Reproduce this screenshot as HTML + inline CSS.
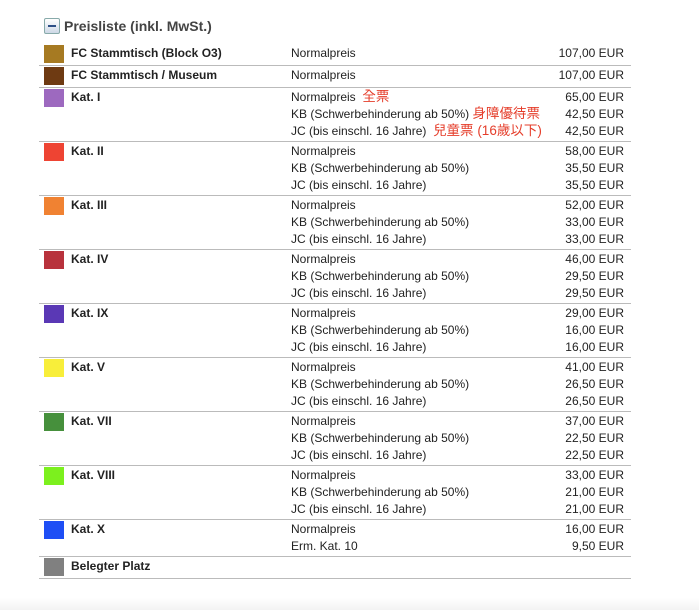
<!DOCTYPE html>
<html><head><meta charset="utf-8"><style>
body{margin:0;width:699px;height:610px;background:#fff;font-family:"Liberation Sans",Arial,sans-serif;font-size:12px;color:#222;position:relative;overflow:hidden}
.title{position:absolute;left:44px;top:18px;font-size:14px;font-weight:bold;color:#444;display:flex;align-items:center}
.mi{width:14px;height:14px;border:1px solid #8aa;background:linear-gradient(#fff,#cdd8e6);border-radius:2px;margin-right:4px;position:relative}
.mi:after{content:"";position:absolute;left:3px;right:3px;top:6px;height:2px;background:#2d4f86}
.list{position:absolute;left:39px;top:44px;width:592px}
.g{position:relative;border-bottom:1px solid #bbb;box-sizing:border-box}
.sw{position:absolute;left:5px;top:1px;width:20px;height:18px}
.n{position:absolute;left:32px;top:1px;font-weight:bold;line-height:17px}
.rows{margin-left:252px;padding-top:1px}
.r{height:17px;line-height:17px;position:relative;white-space:nowrap}
.p{position:absolute;right:7px;top:0}
.cj{color:#e53d2a;font-family:"Liberation Sans","Noto Sans CJK TC",sans-serif;font-size:13.5px;line-height:15px;vertical-align:top;position:relative;top:0}
.foot{position:absolute;left:0;right:0;top:598px;bottom:0;background:linear-gradient(#fff,#f3f3f3)}
</style></head><body>
<div class="title"><div class="mi"></div>Preisliste (inkl. MwSt.)</div>
<div class="list">
<div class="g" style="height:22px"><div class="sw" style="background:#a67a22"></div><div class="n">FC Stammtisch (Block O3)</div><div class="rows"><div class="r">Normalpreis<span class="p">107,00 EUR</span></div></div></div>
<div class="g" style="height:22px"><div class="sw" style="background:#6e3a12"></div><div class="n">FC Stammtisch / Museum</div><div class="rows"><div class="r">Normalpreis<span class="p">107,00 EUR</span></div></div></div>
<div class="g" style="height:54px"><div class="sw" style="background:#9d69bf"></div><div class="n">Kat. I</div><div class="rows"><div class="r">Normalpreis&nbsp; <span class="cj">全票</span><span class="p">65,00 EUR</span></div><div class="r">KB (Schwerbehinderung ab 50%) <span class="cj">身障優待票</span><span class="p">42,50 EUR</span></div><div class="r">JC (bis einschl. 16 Jahre)&nbsp; <span class="cj">兒童票 (16歲以下)</span><span class="p">42,50 EUR</span></div></div></div>
<div class="g" style="height:54px"><div class="sw" style="background:#ee4433"></div><div class="n">Kat. II</div><div class="rows"><div class="r">Normalpreis<span class="p">58,00 EUR</span></div><div class="r">KB (Schwerbehinderung ab 50%)<span class="p">35,50 EUR</span></div><div class="r">JC (bis einschl. 16 Jahre)<span class="p">35,50 EUR</span></div></div></div>
<div class="g" style="height:54px"><div class="sw" style="background:#f08232"></div><div class="n">Kat. III</div><div class="rows"><div class="r">Normalpreis<span class="p">52,00 EUR</span></div><div class="r">KB (Schwerbehinderung ab 50%)<span class="p">33,00 EUR</span></div><div class="r">JC (bis einschl. 16 Jahre)<span class="p">33,00 EUR</span></div></div></div>
<div class="g" style="height:54px"><div class="sw" style="background:#b8323c"></div><div class="n">Kat. IV</div><div class="rows"><div class="r">Normalpreis<span class="p">46,00 EUR</span></div><div class="r">KB (Schwerbehinderung ab 50%)<span class="p">29,50 EUR</span></div><div class="r">JC (bis einschl. 16 Jahre)<span class="p">29,50 EUR</span></div></div></div>
<div class="g" style="height:54px"><div class="sw" style="background:#5a38b5"></div><div class="n">Kat. IX</div><div class="rows"><div class="r">Normalpreis<span class="p">29,00 EUR</span></div><div class="r">KB (Schwerbehinderung ab 50%)<span class="p">16,00 EUR</span></div><div class="r">JC (bis einschl. 16 Jahre)<span class="p">16,00 EUR</span></div></div></div>
<div class="g" style="height:54px"><div class="sw" style="background:#f8ee3a"></div><div class="n">Kat. V</div><div class="rows"><div class="r">Normalpreis<span class="p">41,00 EUR</span></div><div class="r">KB (Schwerbehinderung ab 50%)<span class="p">26,50 EUR</span></div><div class="r">JC (bis einschl. 16 Jahre)<span class="p">26,50 EUR</span></div></div></div>
<div class="g" style="height:54px"><div class="sw" style="background:#46903c"></div><div class="n">Kat. VII</div><div class="rows"><div class="r">Normalpreis<span class="p">37,00 EUR</span></div><div class="r">KB (Schwerbehinderung ab 50%)<span class="p">22,50 EUR</span></div><div class="r">JC (bis einschl. 16 Jahre)<span class="p">22,50 EUR</span></div></div></div>
<div class="g" style="height:54px"><div class="sw" style="background:#7cf01e"></div><div class="n">Kat. VIII</div><div class="rows"><div class="r">Normalpreis<span class="p">33,00 EUR</span></div><div class="r">KB (Schwerbehinderung ab 50%)<span class="p">21,00 EUR</span></div><div class="r">JC (bis einschl. 16 Jahre)<span class="p">21,00 EUR</span></div></div></div>
<div class="g" style="height:37px"><div class="sw" style="background:#1e4ef5"></div><div class="n">Kat. X</div><div class="rows"><div class="r">Normalpreis<span class="p">16,00 EUR</span></div><div class="r">Erm. Kat. 10<span class="p">9,50 EUR</span></div></div></div>
<div class="g" style="height:22px"><div class="sw" style="background:#808080"></div><div class="n">Belegter Platz</div></div>
</div>
<div class="foot"></div>
</body></html>
